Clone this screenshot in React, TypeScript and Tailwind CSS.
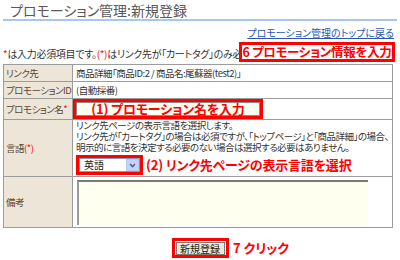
const jp = "font-['Noto_Sans_CJK_JP','Noto_Sans',sans-serif] [font-feature-settings:'palt']";

function Label({ children }: { children: React.ReactNode }) {
  return (
    <td className="bg-[#ede6d8] border border-[#9c9c9c] pl-[2px] align-middle text-[9.5px] leading-[12px] tracking-[-0.5px] text-[#5a4636] whitespace-nowrap">
      {children}
    </td>
  );
}

const cell = "border border-[#9c9c9c] pl-[3px] text-[9.5px] leading-[12px] tracking-[-0.5px] whitespace-nowrap";

export default function App() {
  return (
    <div className={`relative w-[400px] h-[260px] overflow-hidden bg-white text-[#333] ${jp}`}>
      {/* title */}
      <div className="pl-[10px] pt-[2px] text-[14px] leading-[16px] text-[#595959]">
        プロモーション管理:新規登録
      </div>
      <div className="mx-[3px] mt-[1px] h-[2px] bg-[#a9c6ec]" />

      <div className="mt-[6px] pr-[6px] text-right text-[10px] leading-[12px]">
        <a className="text-[#2a55b8] underline">プロモーション管理のトップに戻る</a>
      </div>

      <p className="mt-[9px] pl-[3px] text-[10px] leading-[12px] tracking-[-0.3px] whitespace-nowrap">
        <span className="text-[#ff0000]">*</span>は入力必須項目です。
        <span className="text-[#ff0000]">(*)</span>はリンク先が「カートタグ」のみ必須項目です。
      </p>

      {/* annotation 6 */}
      <div className="absolute left-[239px] top-[42px] w-[156px] h-[20px] border-[3px] border-[#ff0000] bg-white flex items-center justify-center text-[12.5px] font-bold tracking-[-0.3px] text-[#ff0000] whitespace-nowrap">
        6 プロモーション情報を入力
      </div>

      <table className="ml-[3px] mt-[4px] w-[390px] table-fixed border-collapse border border-[#9c9c9c]">
        <colgroup>
          <col className="w-[69px]" />
          <col />
        </colgroup>
        <tbody>
          <tr className="h-[17px]">
            <Label>リンク先</Label>
            <td className={cell}>商品詳細「商品ID:2 / 商品名:尾蘇器(test2)」</td>
          </tr>
          <tr className="h-[17px]">
            <Label>プロモーションID</Label>
            <td className={cell}>(自動採番)</td>
          </tr>
          <tr className="h-[21px]">
            <Label>
              プロモション名<span className="text-[#ff0000]">*</span>
            </Label>
            <td className="border border-[#9c9c9c] p-0">
              <div className="w-[190px] h-[20px] border-[3px] border-[#ff0000] flex items-stretch">
                <div className="flex-1 bg-[#fffff0] border border-[#8a8a8a] flex items-center justify-center text-[13px] font-bold tracking-[-0.2px] text-[#ff0000] whitespace-nowrap">
                  (1) プロモーション名を入力
                </div>
              </div>
            </td>
          </tr>
          <tr>
            <Label>
              言語<span className="text-[#ff0000]">(*)</span>
            </Label>
            <td className={`${cell} h-[57px] pt-0 pb-0 align-top`}>
              <div className="leading-[11px]">リンク先ページの表示言語を選択します。</div>
              <div className="leading-[11px]">
                リンク先が「カートタグ」の場合は必須ですが、「トップページ」と「商品詳細」の場合、
              </div>
              <div className="leading-[11px]">明示的に言語を決定する必要のない場合は選択する必要はありません。</div>
              <div className="mt-[2px] flex items-center gap-[3px] tracking-normal">
                <div className="w-[67px] h-[20px] border-[3px] border-[#ff0000] flex items-center">
                  <div className="flex-1 h-[14px] border border-[#7f9db9] bg-white flex items-center">
                    <span className="flex-1 pl-[4px] text-[10px] leading-[12px] text-[#222]">英語</span>
                    <span className="w-[13px] h-[12px] bg-[#c3d3fd] border border-[#b4c8f6] flex items-center justify-center">
                      <svg width="7" height="5" viewBox="0 0 7 5">
                        <path d="M1 1 L3.5 3.5 L6 1" stroke="#4d6185" strokeWidth="1.6" fill="none" />
                      </svg>
                    </span>
                  </div>
                </div>
                <span className="text-[13px] font-bold tracking-[-0.2px] text-[#ff0000] leading-[16px]">
                  (2) リンク先ページの表示言語を選択
                </span>
              </div>
            </td>
          </tr>
          <tr>
            <Label>備考</Label>
            <td className="h-[51px] border border-[#9c9c9c] pl-[4px] py-[2px]">
              <div className="w-[291px] h-[45px] bg-[#fffff0] border-t-2 border-l-2 border-t-[#7a7a7a] border-l-[#9a9a9a]" />
            </td>
          </tr>
        </tbody>
      </table>

      {/* submit */}
      <div className="relative mt-[10px] flex justify-center">
        <div className="w-[57px] h-[20px] border-[3px] border-[#ff0000] flex items-center justify-center">
          <button className="w-[49px] h-[13px] bg-[#ece9d8] border border-[#7a7a7a] text-[10px] leading-[11px] text-[#222]">
            新規登録
          </button>
        </div>
        <span className="absolute left-[233px] top-[1px] text-[13px] font-bold text-[#ff0000] leading-[18px]">
          7 クリック
        </span>
      </div>
    </div>
  );
}
